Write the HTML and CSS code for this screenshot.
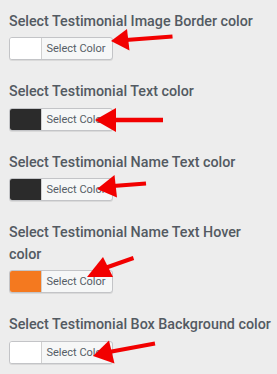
FILE: index.html
```html
<!DOCTYPE html>
<html lang="en">
<head>
    <meta charset="UTF-8">
    <meta name="viewport" content="width=device-width, initial-scale=1.0">
    <title>Testimonial Colors</title>
    <link rel="stylesheet" href="styles.css">
</head>
<body>

<div class="settings">
    <div class="field">
        <label class="field-label">Select Testimonial Image Border color</label>
        <button class="color-btn"><span class="swatch swatch-white"></span><span class="btn-text">Select Color</span></button>
    </div>
    <div class="field">
        <label class="field-label">Select Testimonial Text color</label>
        <button class="color-btn"><span class="swatch swatch-dark"></span><span class="btn-text">Select Color</span></button>
    </div>
    <div class="field">
        <label class="field-label">Select Testimonial Name Text color</label>
        <button class="color-btn"><span class="swatch swatch-dark"></span><span class="btn-text">Select Color</span></button>
    </div>
    <div class="field">
        <label class="field-label">Select Testimonial Name Text Hover color</label>
        <button class="color-btn"><span class="swatch swatch-orange"></span><span class="btn-text">Select Color</span></button>
    </div>
    <div class="field">
        <label class="field-label">Select Testimonial Box Background color</label>
        <button class="color-btn"><span class="swatch swatch-white"></span><span class="btn-text">Select Color</span></button>
    </div>
</div>

<!-- red annotation arrows drawn over the screenshot -->
<svg class="arrows" width="277" height="374" viewBox="0 0 277 374">
    <g fill="#f20000" stroke="#f20000">
        <line x1="126" y1="40" x2="172.5" y2="36.5" stroke-width="4"/>
        <polygon points="111,41 127,29 129.5,50.5" stroke="none"/>

        <line x1="112" y1="120" x2="163" y2="120" stroke-width="4.5"/>
        <polygon points="95,120 116,108 116,132" stroke="none"/>

        <line x1="113" y1="186" x2="146" y2="183.5" stroke-width="4"/>
        <polygon points="97,189 114.5,175 117,197.5" stroke="none"/>

        <line x1="105" y1="268" x2="133.5" y2="258" stroke-width="4"/>
        <polygon points="87,277 103,257 113,277" stroke="none"/>

        <line x1="109" y1="352" x2="155" y2="343.5" stroke-width="4"/>
        <polygon points="93,356 109,340.5 114.5,363.5" stroke="none"/>
    </g>
</svg>

</body>
</html>
```

FILE: styles.css
```css
body {
    font-family: Roboto, "Liberation Sans", Arial, sans-serif;
    background-color: #ededed;
    margin: 0;
    padding: 10px 0 0 9px;
    position: relative;
    width: 277px;
    height: 374px;
    box-sizing: border-box;
    overflow: hidden;
}
.field {
    margin-bottom: 20px;
}
.field-label {
    display: block;
    max-width: 263px;
    color: #535a62;
    font-size: 14.3px;
    font-weight: 500;
    line-height: 22.3px;
    margin-bottom: 5px;
}
.color-btn {
    display: flex;
    align-items: stretch;
    height: 23px;
    width: 104px;
    padding: 0;
    background-color: #f6f7f7;
    border: 1px solid #c3c4c7;
    border-radius: 3px;
    box-shadow: 0 1px 0 rgba(0, 0, 0, 0.08);
    overflow: hidden;
    font-family: inherit;
    cursor: pointer;
}
.swatch {
    width: 31px;
    border-right: 1px solid #d0d0d0;
}
.swatch-white {
    background-color: #fff;
}
.swatch-dark {
    background-color: #2b2b2b;
}
.swatch-orange {
    background-color: #f4791f;
}
.btn-text {
    flex: 1;
    font-size: 11px;
    color: #555d66;
    line-height: 21px;
    text-align: center;
    padding-right: 2px;
}
.arrows {
    position: absolute;
    top: 0;
    left: 0;
    pointer-events: none;
}
```
